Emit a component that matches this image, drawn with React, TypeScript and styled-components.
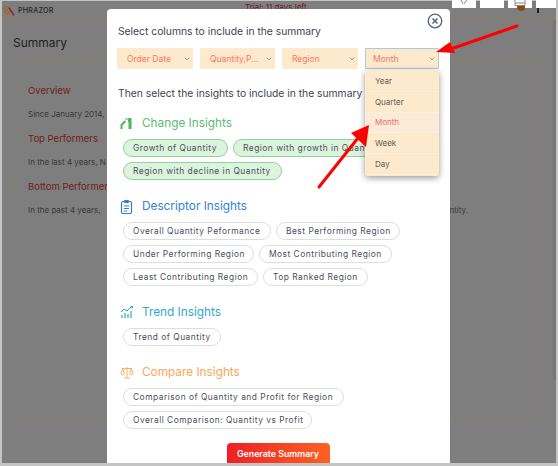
import React from "react";
import styled, { createGlobalStyle } from "styled-components";

const Global = createGlobalStyle`
  html, body { margin: 0; padding: 0; background: #c4c4c4; }
  body { width: 558px; height: 466px; overflow: hidden; font-family: Inter, "Noto Sans", sans-serif; }
`;

const Frame = styled.div`
  position: relative;
  width: 558px;
  height: 463px;
  padding: 1px 2px 0 2px;
  box-sizing: border-box;
  overflow: hidden;
`;

const Page = styled.div`
  height: 100%;
  background: #7e7e7e;
  display: flex;
  flex-direction: column;
`;

const Header = styled.header`
  height: 18px;
  flex: none;
  box-sizing: content-box;
  border-bottom: 1px solid #8f7f5c;
  display: flex;
  align-items: center;
  position: relative;
`;

const Brand = styled.span`
  font-size: 7.2px;
  font-weight: 500;
  color: #262626;
  margin-left: 2px;
  letter-spacing: 0.2px;
`;

const Trial = styled.span`
  position: absolute;
  left: 243px;
  top: 1px;
  font-size: 8px;
  color: #6d1616;
`;

const Title = styled.h1`
  margin: 15px 0 0 11px;
  font-size: 12px;
  line-height: 16px;
  font-weight: 400;
  color: #1e1e1e;
`;

const Card = styled.section`
  margin: 8px 16px 0 11px;
  height: 359px;
  flex: none;
  box-sizing: border-box;
  border: 1px solid #8a7f68;
  border-radius: 6px;
  padding: 25px 14px 0;
  display: flex;
  flex-direction: column;
`;

const Heading = styled.div`
  font-size: 9.5px;
  line-height: 12px;
  color: #6f1d1d;
  height: 24px;
`;

const Line = styled.div`
  font-size: 8px;
  line-height: 11px;
  height: 24px;
  color: #383838;
  display: flex;
  justify-content: space-between;
  padding-right: 57px;
`;

const WhiteTabs = styled.div`
  position: absolute;
  top: 0;
  left: 452px;
  display: flex;
  gap: 4px;
`;

const WhiteTab = styled.div<{ $w: number }>`
  width: ${(p) => p.$w}px;
  height: 8px;
  background: #fff;
  display: flex;
  justify-content: center;
`;

const Avatar = styled.div`
  position: absolute;
  left: 517px;
  top: 6px;
  width: 8px;
  height: 5px;
  border-radius: 0 0 5px 5px;
  background: #8a4a10;
`;

const Dots = styled.div`
  position: absolute;
  left: 537px;
  top: 8px;
  width: 2px;
  height: 5px;
  background: #222;
`;

const Track = styled.div`
  position: absolute;
  left: 553px;
  top: 20px;
  width: 3px;
  height: 360px;
  background: #757575;
`;

const Modal = styled.div`
  position: absolute;
  left: 107px;
  top: 9px;
  width: 343px;
  height: 460px;
  box-sizing: border-box;
  background: #fff;
  border-radius: 4px 4px 0 0;
  padding: 15px 10px 0 10px;
  display: flex;
  flex-direction: column;
`;

const Close = styled.svg`
  position: absolute;
  left: 320px;
  top: 4px;
`;

const Prompt = styled.div`
  font-size: 10.3px;
  line-height: 14px;
  padding-left: 1px;
  color: #3f4452;
`;

const SelectRow = styled.div`
  display: flex;
  gap: 7px;
  margin-top: 10px;
`;

const Select = styled.div<{ $w: number; $open?: boolean }>`
  width: ${(p) => p.$w}px;
  height: 21px;
  box-sizing: border-box;
  background: #fdeacc;
  border-radius: 1px;
  padding: 0 3px 0 ${(p) => (p.$open ? 7 : 10)}px;
  display: flex;
  align-items: center;
  justify-content: space-between;
  font-size: 8.5px;
  color: #fb7566;
  border: ${(p) => (p.$open ? "1px solid #a9c8e6" : "none")};
`;

const Chevron = () => (
  <svg width="6" height="4" viewBox="0 0 6 4">
    <path d="M1 .8l2 2 2-2" fill="none" stroke="#8b8a82" strokeWidth="1" />
  </svg>
);

const Then = styled(Prompt)`
  margin-top: 17px;
`;

const Group = styled.div<{ $mt: number }>`
  margin-top: ${(p) => p.$mt}px;
  padding-left: 6px;
`;

const GroupHead = styled.div<{ $c: string }>`
  display: flex;
  align-items: center;
  gap: 8px;
  height: 16px;
  margin-left: -3px;
  font-size: 11.8px;
  color: ${(p) => p.$c};
`;

const Chips = styled.div`
  display: flex;
  flex-direction: column;
  gap: 5px;
  margin-top: 8px;
`;

const ChipRow = styled.div`
  display: flex;
  gap: 5px;
`;

const Chip = styled.div<{ $on?: boolean; $w: number }>`
  width: ${(p) => p.$w}px;
  height: 18px;
  box-sizing: border-box;
  padding-left: 9px;
  display: flex;
  align-items: center;
  white-space: nowrap;
  overflow: hidden;
  border-radius: 9px;
  font-size: 8.4px;
  letter-spacing: 0.5px;
  color: #4a4f5c;
  border: 1px solid ${(p) => (p.$on ? "#8fd39a" : "#dedede")};
  background: ${(p) => (p.$on ? "#dcf3dd" : "#fff")};
`;

const Generate = styled.button`
  align-self: center;
  margin: 14px 0 0 -1px;
  width: 103px;
  height: 24px;
  flex: none;
  border: none;
  border-radius: 4px 4px 0 0;
  background: linear-gradient(90deg, #ee1f25, #fd6224);
  color: #fff;
  font-family: inherit;
  font-size: 8.8px;
  font-weight: 600;
  padding: 0 0 4px;
`;

const Menu = styled.div`
  position: absolute;
  left: 365px;
  top: 70px;
  width: 74px;
  height: 106px;
  background: #fdeacc;
  border-radius: 3px;
  box-shadow: 0 2px 6px rgba(0, 0, 0, 0.4);
  display: flex;
  flex-direction: column;
  padding: 1px 0;
  box-sizing: border-box;
`;

const MenuItem = styled.div<{ $active?: boolean }>`
  flex: 1;
  display: flex;
  align-items: center;
  padding-left: 10px;
  font-size: 8px;
  border-bottom: 1px solid rgba(255, 255, 255, 0.25);
  color: ${(p) => (p.$active ? "#e9696b" : "#5d5a55")};
  background: ${(p) => (p.$active ? "#fcebd6" : "transparent")};
`;

const Arrows = styled.svg`
  position: absolute;
  left: 0;
  top: 0;
  pointer-events: none;
`;

const Logo = () => (
  <svg width="14" height="13" viewBox="0 0 14 13">
    <path d="M1 6l4-4M2.5 8.5l5-5M4.5 10.5l4-4" stroke="#a8652a" strokeWidth="1.7" />
    <path d="M7 3.5l5 8" stroke="#8c2a2a" strokeWidth="1.5" />
  </svg>
);

const ChangeIcon = () => (
  <svg width="14" height="14" viewBox="0 0 14 14">
    <path d="M1.5 13V9l4-4" fill="none" stroke="#4fb45e" strokeWidth="2" />
    <path d="M8.5 13V2h3v11z" fill="#4fb45e" />
    <path d="M5 3h3.5v3" fill="none" stroke="#4fb45e" strokeWidth="1" />
  </svg>
);

const DescIcon = () => (
  <svg width="14" height="15" viewBox="0 0 14 15">
    <rect x="1.5" y="2.5" width="10" height="12" rx="1.5" fill="none" stroke="#2b7fd6" strokeWidth="1.2" />
    <rect x="4" y="1" width="5" height="3" rx="1" fill="#2b7fd6" />
    <path d="M4 7h5M4 9.5h5M4 12h3" stroke="#2b7fd6" strokeWidth="1" />
  </svg>
);

const TrendIcon = () => (
  <svg width="14" height="14" viewBox="0 0 14 14">
    <path d="M1 7l3-3 3 2 5-5" fill="none" stroke="#2aa9bf" strokeWidth="1" />
    <path d="M10 1h3v3z" fill="#2aa9bf" />
    <path d="M2 13v-3M5 13V8M8 13V9M11 13V6" stroke="#2aa9bf" strokeWidth="1.2" />
  </svg>
);

const CompareIcon = () => (
  <svg width="14" height="13" viewBox="0 0 14 13">
    <g fill="none" stroke="#f7a850" strokeWidth="0.9">
      <path d="M7 1v10M4 12h6M2 2.5h10" />
      <path d="M2.7 3L1 7.5a1.8 1.8 0 003.4 0zM11.3 3L9.6 7.5a1.8 1.8 0 003.4 0z" />
    </g>
  </svg>
);

export default function App() {
  return (
    <Frame>
      <Global />
      <Page>
        <Header>
          <Logo />
          <Brand>PHRAZOR</Brand>
          <Trial>Trial: 11 days left</Trial>
        </Header>
        <Title>Summary</Title>
        <Card>
          <Heading>Overview</Heading>
          <Line>Since January 2014,</Line>
          <Heading>Top Performers</Heading>
          <Line>In the last 4 years, N</Line>
          <Heading>Bottom Performers</Heading>
          <Line>
            <span>In the past 4 years,</span>
            <span>Quantity.</span>
          </Line>
        </Card>
      </Page>
      <WhiteTabs>
        <WhiteTab $w={24}>
          <svg width="10" height="7" viewBox="0 0 10 7">
            <path d="M2 0l2 4M8 0L5 4" stroke="#888" fill="none" />
          </svg>
        </WhiteTab>
        <WhiteTab $w={24} />
        <WhiteTab $w={24}>
          <svg width="12" height="7" viewBox="0 0 12 7">
            <path d="M1 0v5.5h10V0M1 3h10" stroke="#888" fill="none" />
          </svg>
        </WhiteTab>
        <WhiteTab $w={20} />
      </WhiteTabs>
      <Avatar />
      <Dots />
      <Track />
      <Modal>
        <Close width="16" height="16" viewBox="0 0 16 16">
          <circle cx="8" cy="8" r="6.8" fill="none" stroke="#56648a" strokeWidth="1.3" />
          <path d="M5.5 5.5l5 5M10.5 5.5l-5 5" stroke="#56648a" strokeWidth="1.6" />
        </Close>
        <Prompt>Select columns to include in the summary</Prompt>
        <SelectRow>
          <Select $w={76}>Order Date<Chevron /></Select>
          <Select $w={75}>Quantity,P...<Chevron /></Select>
          <Select $w={76}>Region<Chevron /></Select>
          <Select $w={74} $open>Month<Chevron /></Select>
        </SelectRow>
        <Then>Then select the insights to include in the summary</Then>
        <Group $mt={15}>
          <GroupHead $c="#5cbb73"><ChangeIcon />Change Insights</GroupHead>
          <Chips>
            <ChipRow>
              <Chip $on $w={105}>Growth of Quantity</Chip>
              <Chip $on $w={150}>Region with growth in Quantity</Chip>
            </ChipRow>
            <ChipRow>
              <Chip $on $w={159}>Region with decline in Quantity</Chip>
            </ChipRow>
          </Chips>
        </Group>
        <Group $mt={18}>
          <GroupHead $c="#2f7fd8"><DescIcon />Descriptor Insights</GroupHead>
          <Chips>
            <ChipRow>
              <Chip $w={148}>Overall Quantity Peformance</Chip>
              <Chip $w={124}>Best Performing Region</Chip>
            </ChipRow>
            <ChipRow>
              <Chip $w={131}>Under Performing Region</Chip>
              <Chip $w={133}>Most Contributing Region</Chip>
            </ChipRow>
            <ChipRow>
              <Chip $w={135}>Least Contributing Region</Chip>
              <Chip $w={105}>Top Ranked Region</Chip>
            </ChipRow>
          </Chips>
        </Group>
        <Group $mt={18}>
          <GroupHead $c="#2fa9c3"><TrendIcon />Trend Insights</GroupHead>
          <Chips>
            <ChipRow>
              <Chip $w={98}>Trend of Quantity</Chip>
            </ChipRow>
          </Chips>
        </Group>
        <Group $mt={18}>
          <GroupHead $c="#f9a658"><CompareIcon />Compare Insights</GroupHead>
          <Chips>
            <ChipRow>
              <Chip $w={221}>Comparison of Quantity and Profit for Region</Chip>
            </ChipRow>
            <ChipRow>
              <Chip $w={189}>Overall Comparison: Quantity vs Profit</Chip>
            </ChipRow>
          </Chips>
        </Group>
        <Generate>Generate Summary</Generate>
      </Modal>
      <Menu>
        <MenuItem>Year</MenuItem>
        <MenuItem>Quarter</MenuItem>
        <MenuItem $active>Month</MenuItem>
        <MenuItem>Week</MenuItem>
        <MenuItem>Day</MenuItem>
      </Menu>
      <Arrows width="558" height="466" viewBox="0 0 558 466">
        <path d="M517 26L448 50" stroke="#f00" strokeWidth="3" strokeLinecap="round" />
        <path d="M436 52L450 42L455 53Z" fill="#f00" />
        <path d="M319 187L358 138" stroke="#f00" strokeWidth="3" strokeLinecap="round" />
        <path d="M369 125L351 133L366 147Z" fill="#f00" />
      </Arrows>
    </Frame>
  );
}
